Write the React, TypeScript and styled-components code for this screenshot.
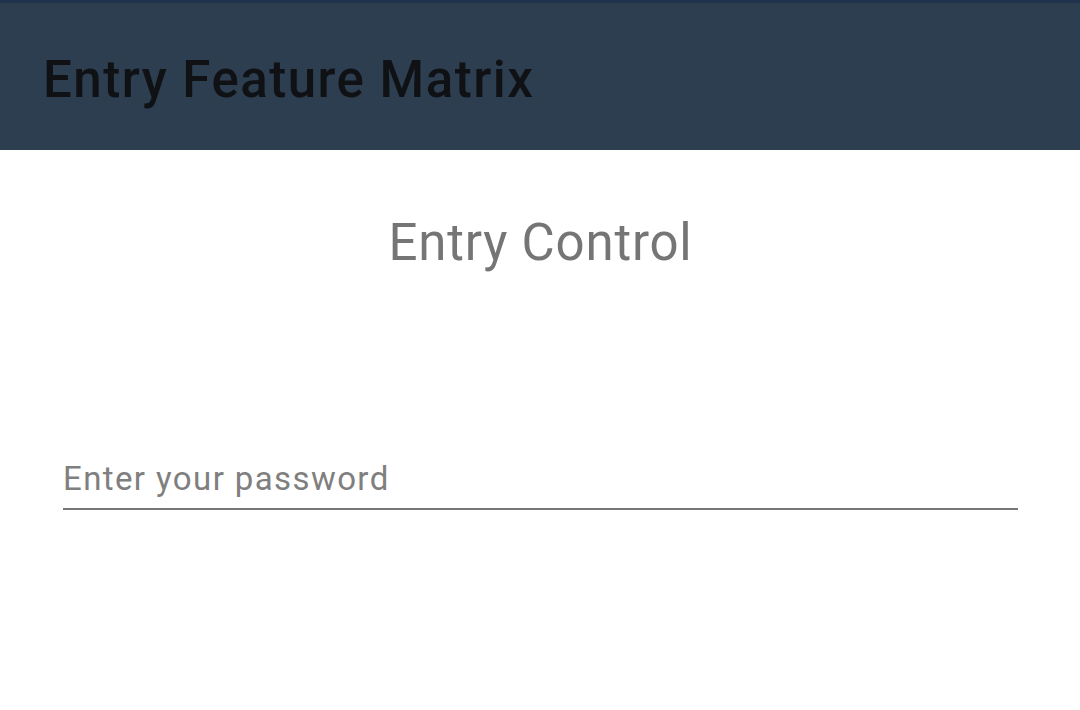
import React from 'react'
import styled, { createGlobalStyle } from 'styled-components'

const GlobalStyle = createGlobalStyle`
	html, body {
		margin: 0;
		padding: 0;
		background: #ffffff;
		font-family: Roboto, "Noto Sans", sans-serif;
	}
`

const Page = styled.div`
	width: 1080px;
	height: 710px;
	display: flex;
	flex-direction: column;
	background: #ffffff;
	overflow: hidden;
`

const TopStrip = styled.div`
	height: 3px;
	background: #1f344c;
`

const Toolbar = styled.header`
	height: 147px;
	display: flex;
	align-items: center;
	padding: 0 43px;
	box-sizing: border-box;
	background: #2d3e50;
`

const ToolbarTitle = styled.h1`
	margin: 0;
	font-size: 51px;
	font-weight: 500;
	color: #0f1114;
	letter-spacing: 1.5px;
	padding-top: 6px;
`

const Content = styled.main`
	flex: 1;
	display: flex;
	flex-direction: column;
	align-items: stretch;
	padding: 63px 62px 0 63px;
`

const Heading = styled.h2`
	margin: 0;
	text-align: center;
	font-size: 51px;
	font-weight: 400;
	color: #757575;
	line-height: 60px;
	letter-spacing: 0.8px;
`

const Field = styled.input`
	margin-top: 181px;
	height: 48px;
	border: none;
	border-bottom: 2px solid #777777;
	outline: none;
	padding: 0 0 6px 0;
	font-family: Roboto, "Noto Sans", sans-serif;
	font-size: 33px;
	letter-spacing: 1.4px;
	color: #333;
	background: transparent;

	&::placeholder {
		color: #7f7f7f;
	}
`

export default function App() {
	return (
		<>
			<GlobalStyle />
			<Page>
				<TopStrip />
				<Toolbar>
					<ToolbarTitle>Entry Feature Matrix</ToolbarTitle>
				</Toolbar>
				<Content>
					<Heading>Entry Control</Heading>
					<Field type="password" placeholder="Enter your password" />
				</Content>
			</Page>
		</>
	)
}
